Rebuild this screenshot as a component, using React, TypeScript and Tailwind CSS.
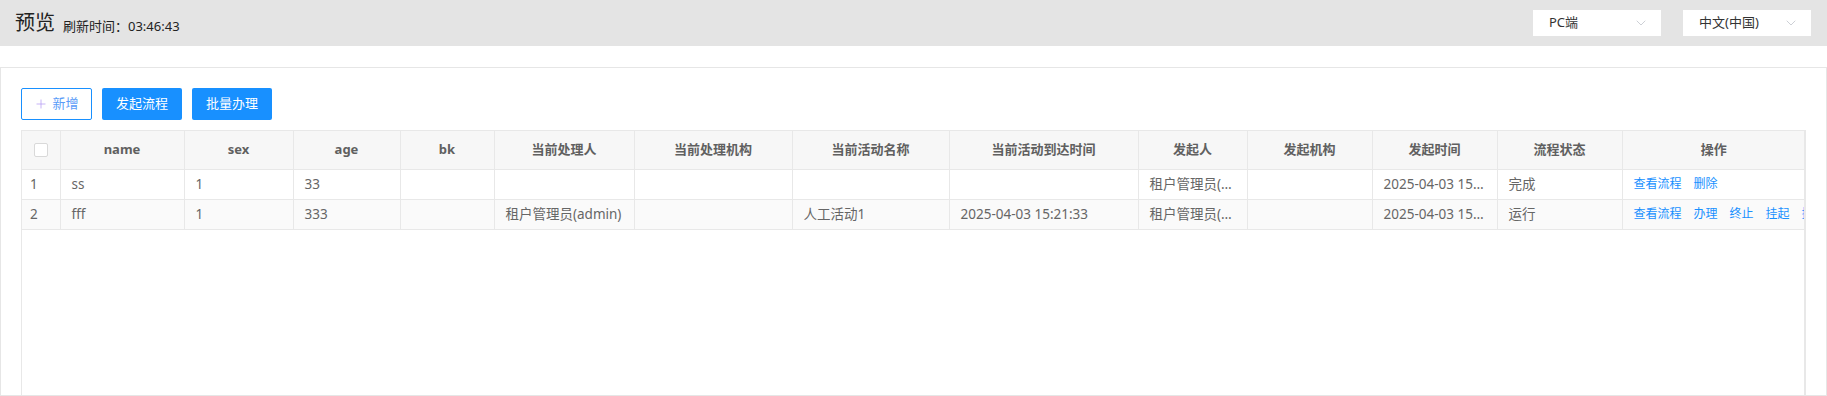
import { ChevronDown, Plus } from "lucide-react";

const FONT = { fontFamily: '"Noto Sans", "Noto Sans CJK SC", sans-serif' };

const columns = [
  { key: "name", title: "name", w: "w-[124px]" },
  { key: "sex", title: "sex", w: "w-[109px]" },
  { key: "age", title: "age", w: "w-[107px]" },
  { key: "bk", title: "bk", w: "w-[94px]" },
  { key: "handler", title: "当前处理人", w: "w-[140px]" },
  { key: "handlerOrg", title: "当前处理机构", w: "w-[158px]" },
  { key: "activity", title: "当前活动名称", w: "w-[157px]" },
  { key: "arrive", title: "当前活动到达时间", w: "w-[189px]" },
  { key: "starter", title: "发起人", w: "w-[109px]" },
  { key: "starterOrg", title: "发起机构", w: "w-[125px]" },
  { key: "startTime", title: "发起时间", w: "w-[125px]" },
  { key: "status", title: "流程状态", w: "w-[125px]" },
];

const rows: Record<string, string>[] = [
  { name: "ss", sex: "1", age: "33", bk: "", handler: "", handlerOrg: "", activity: "", arrive: "", starter: "租户管理员(admin)", starterOrg: "", startTime: "2025-04-03 15:21:33", status: "完成" },
  { name: "fff", sex: "1", age: "333", bk: "", handler: "租户管理员(admin)", handlerOrg: "", activity: "人工活动1", arrive: "2025-04-03 15:21:33", starter: "租户管理员(admin)", starterOrg: "", startTime: "2025-04-03 15:21:33", status: "运行" },
];

const actions = [["查看流程", "删除"], ["查看流程", "办理", "终止", "挂起", "挂起"]];

function Select({ label }: { label: string }) {
  return (
    <div className="flex h-[26px] w-[128px] items-center justify-between bg-white pl-4 pr-3 text-[13px] text-[#333]">
      <span>{label}</span>
      <ChevronDown className="h-4 w-4 text-[#c0c4cc]" strokeWidth={1.2} />
    </div>
  );
}

export default function App() {
  return (
    <div className="flex h-[396px] flex-col overflow-hidden bg-white" style={FONT}>
      {/* Top bar */}
      <div className="flex h-[46px] shrink-0 items-center justify-between bg-[#e4e4e4] pl-[15px] pr-4">
        <div className="flex items-end gap-2">
          <span className="text-[20px] leading-none text-[#222]">预览</span>
          <span className="text-[13px] leading-none text-[#222]">刷新时间：03:46:43</span>
        </div>
        <div className="flex gap-[22px]">
          <Select label="PC端" />
          <Select label="中文(中国)" />
        </div>
      </div>

      <div className="h-[21px] shrink-0" />

      {/* Card */}
      <div className="flex flex-1 flex-col border border-[#e6e6e6] pl-5 pr-5 pt-5">
        <div className="flex gap-[10px]">
          <button className="flex h-8 w-[71px] items-center justify-center gap-1 rounded-[2px] border border-[#1890ff] bg-white text-[13px] text-[#5a9cf8]">
            <Plus className="h-3.5 w-3.5 text-[#b59cf5]" strokeWidth={1.3} />
            新增
          </button>
          <button className="h-8 w-20 rounded-[2px] bg-[#1890ff] text-[13px] text-white">发起流程</button>
          <button className="h-8 w-20 rounded-[2px] bg-[#1890ff] text-[13px] text-white">批量办理</button>
        </div>

        <div className="mt-[10px] flex-1 overflow-hidden border-l border-r-2 border-t border-[#e8e8e8]">
          <table className="w-[1783px] table-fixed border-collapse text-[13.5px]">
            <colgroup>
              <col className="w-[38px]" />
              {columns.map((c) => (
                <col key={c.key} className={c.w} />
              ))}
              <col className="w-[183px]" />
            </colgroup>
            <thead>
              <tr className="h-[38px] bg-[#f7f7f7] text-[13px] text-[#606060]">
                <th className="border-b border-r border-[#e8e8e8]">
                  <div className="mx-auto h-[14px] w-[14px] rounded-[2px] border border-[#d9d9d9] bg-white" />
                </th>
                {columns.map((c) => (
                  <th key={c.key} className="border-b border-r border-[#e8e8e8] font-bold">
                    {c.title}
                  </th>
                ))}
                <th className="border-b border-[#e8e8e8] font-bold">操作</th>
              </tr>
            </thead>
            <tbody>
              {rows.map((r, i) => (
                <tr key={i} className={`h-[30px] text-[#666] ${i % 2 ? "bg-[#fafafa]" : "bg-white"}`}>
                  <td className="border-b border-r border-[#e8e8e8] pl-2">{i + 1}</td>
                  {columns.map((c) => (
                    <td key={c.key} className="truncate border-b border-r border-[#e8e8e8] px-[11px]">
                      {r[c.key]}
                    </td>
                  ))}
                  <td className="overflow-hidden whitespace-nowrap border-b border-[#e8e8e8] pl-[11px] text-[12px] text-[#1890ff]">
                    <div className="flex gap-3">
                      {actions[i].map((a, j) => (
                        <span key={j}>{a}</span>
                      ))}
                    </div>
                  </td>
                </tr>
              ))}
            </tbody>
          </table>
        </div>
      </div>
    </div>
  );
}
